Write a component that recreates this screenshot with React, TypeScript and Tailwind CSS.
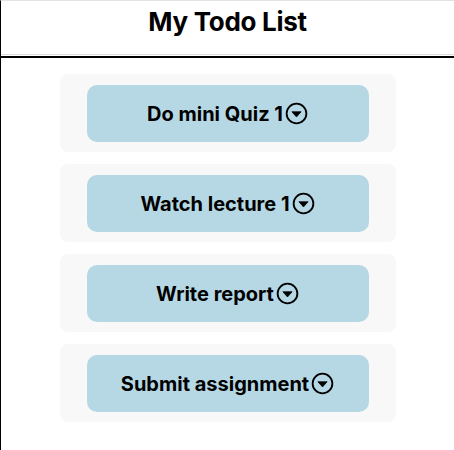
import React from "react";

const items = ["Do mini Quiz 1", "Watch lecture 1", "Write report", "Submit assignment"];

function CaretIcon() {
  return (
    <svg width="23" height="23" viewBox="0 0 24 24" className="shrink-0 ml-[2px]">
      <circle cx="12" cy="12" r="10.3" fill="none" stroke="#000" strokeWidth="1.9" />
      <path d="M7.2 10.2 L16.8 10.2 L12 15.6 Z" fill="#000" strokeLinejoin="round" stroke="#000" strokeWidth="0.8" />
    </svg>
  );
}

export default function App() {
  return (
    <div
      className="min-h-[450px] border-l-[1.5px] border-black border-t border-t-[#e3e3e3] bg-white"
      style={{ fontFamily: "Inter, 'Noto Sans', sans-serif" }}
    >
      <div className="h-[54px] flex items-center justify-center pb-[11px] border-b border-[#dcdcdc]">
        <h1 className="text-[26px] font-bold text-black tracking-[-0.3px] leading-none">My Todo List</h1>
      </div>
      <div className="mt-px h-[2px] bg-black" />
      <div className="flex flex-col items-center gap-3 pt-4">
        {items.map((t) => (
          <div key={t} className="w-[336px] h-[78px] rounded-lg bg-[#f8f8f8] flex justify-center pt-[11px]">
            <div className="w-[282px] h-[57px] rounded-[10px] bg-[#b5d8e4] flex items-center justify-center">
              <span className="text-[20px] font-bold text-black leading-none">{t}</span>
              <CaretIcon />
            </div>
          </div>
        ))}
      </div>
    </div>
  );
}
